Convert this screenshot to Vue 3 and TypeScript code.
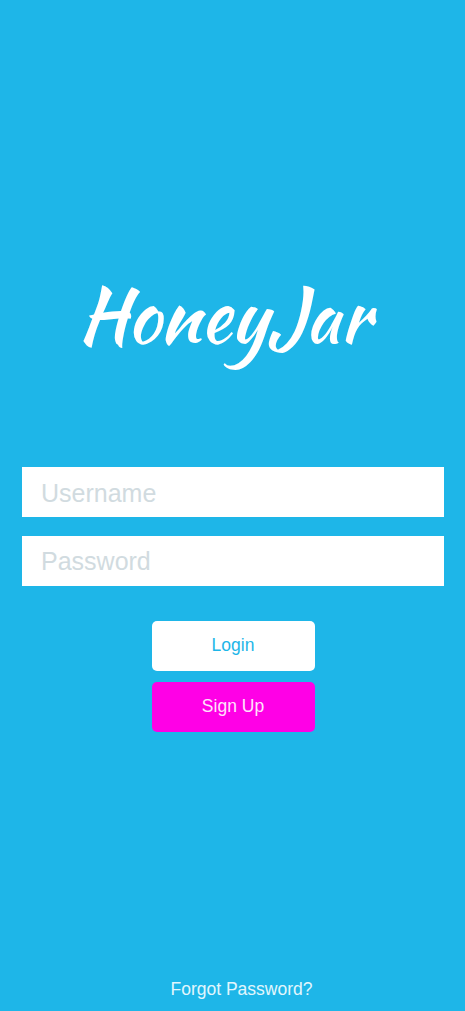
<script setup lang="ts">
import { ref } from 'vue'

const username = ref<string>('')
const password = ref<string>('')
</script>

<template>
  <main class="screen">
    <h1 class="brand">HoneyJar</h1>
    <form class="form" @submit.prevent>
      <input v-model="username" class="field" type="text" placeholder="Username" aria-label="Username" />
      <input v-model="password" class="field" type="password" placeholder="Password" aria-label="Password" />
      <div class="actions">
        <button class="button login" type="submit">Login</button>
        <button class="button signup" type="button">Sign Up</button>
      </div>
    </form>
    <a class="forgot">Forgot Password?</a>
  </main>
</template>

<style>
body {
  margin: 0;
  background: #1eb6e8;
}
</style>

<style scoped>
.screen {
  box-sizing: border-box;
  display: flex;
  flex-direction: column;
  height: 1011px;
  padding: 266px 21px 0 22px;
  background: #1eb6e8;
  font-family: "Liberation Sans", Arial, sans-serif;
}
.brand {
  margin: 0 0 101px 56px;
  height: 100px;
  color: #fff;
  font: 400 75px/100px "Kaushan Script", cursive;
  white-space: nowrap;
}
.form {
  display: flex;
  flex-direction: column;
  gap: 19px;
}
.field {
  box-sizing: border-box;
  width: 100%;
  height: 50px;
  margin: 0;
  padding: 2px 19px 0;
  border: 0;
  border-radius: 0;
  outline: 0;
  background: #fff;
  color: #34495e;
  font: 25px "Liberation Sans", Arial, sans-serif;
}
.field::placeholder {
  color: #d1dbe0;
  opacity: 1;
}
.field[type="password"] {
  padding-top: 1px;
}
.actions {
  display: flex;
  flex-direction: column;
  align-items: center;
  gap: 11px;
  margin-top: 16px;
}
.button {
  width: 163px;
  height: 50px;
  padding: 0 0 2px;
  border: 0;
  border-radius: 5px;
  font: 17.5px "Liberation Sans", Arial, sans-serif;
}
.login {
  background: #fff;
  color: #1eb6e8;
}
.signup {
  background: #ff00e6;
  color: #ffe3fc;
}
.forgot {
  align-self: center;
  margin: auto 0 12px 17px;
  color: #e2f6fd;
  font-size: 17.5px;
  line-height: 20px;
}
</style>
